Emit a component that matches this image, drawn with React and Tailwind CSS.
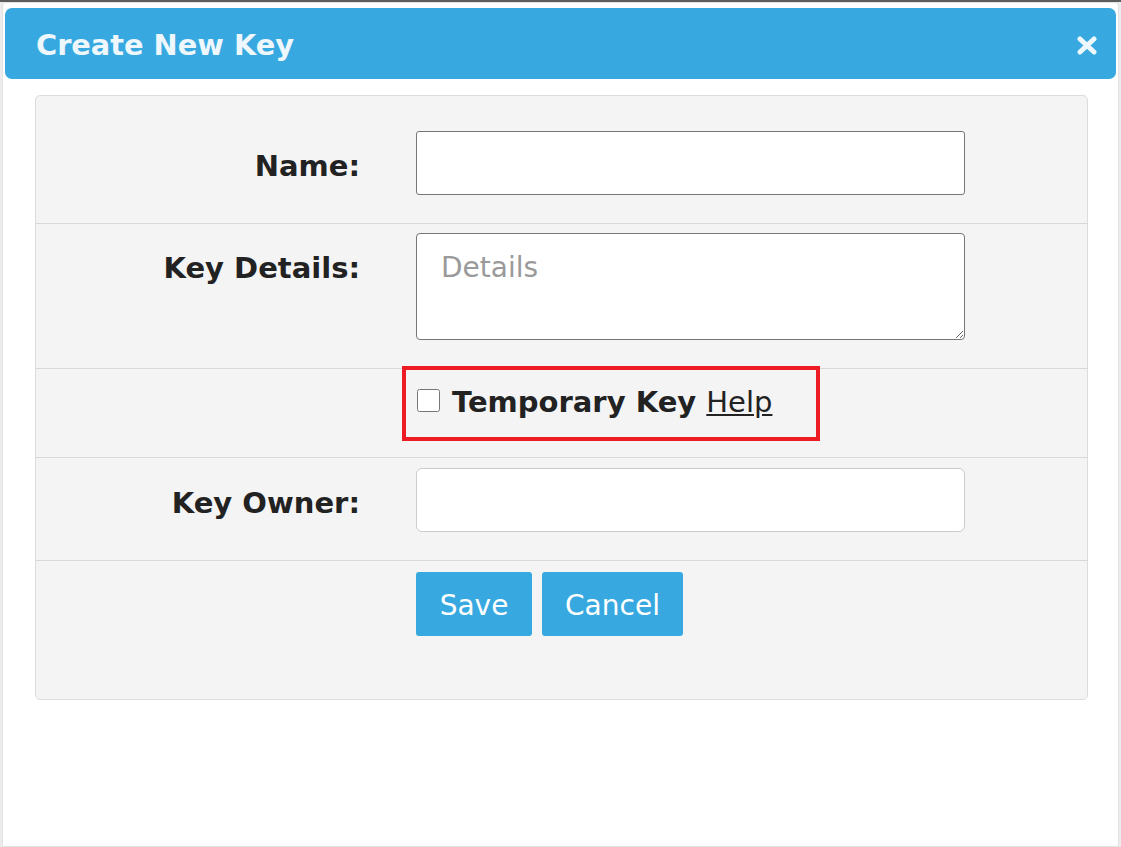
import { useState } from 'react'

const font = { fontFamily: '"DejaVu Sans", Verdana, sans-serif' }

function Label({ children }) {
  return (
    <div className="w-[324px] shrink-0 text-right pt-[18px] text-[29px] leading-[34px] font-bold text-[#222]">
      {children}
    </div>
  )
}

export default function App() {
  const [form, setForm] = useState({ name: '', details: '', temp: false, owner: '' })

  return (
    <div style={font} className="min-h-[847px] bg-[#ececec] border-t-2 border-[#5c5c5c] px-[2px]">
      <div className="min-h-[845px] bg-white border border-[#e2e2e2] rounded-t-[4px] px-[2px] pt-[5px]">
        <div className="h-[71px] bg-[#38a9e0] rounded-[7px] flex items-center justify-between pl-[31px] pr-[19px] pt-[3px]">
          <h1 className="text-[28.8px] font-bold text-[#eef7fc] leading-none">Create New Key</h1>
          <button type="button" className="text-[#eef7fc]">
            <svg width="20" height="19" viewBox="0 0 20 19">
              <path d="M3 3 L17 16 M17 3 L3 16" stroke="currentColor" strokeWidth="5" strokeLinecap="round" />
            </svg>
          </button>
        </div>

        <div className="mt-[16px] ml-[30px] mr-[28px] bg-[#f4f4f4] border border-[#dcdcdc] rounded-[5px]">
          <div className="flex h-[128px] pt-[35px] border-b border-[#d8d8d8]">
            <Label>Name:</Label>
            <input
              value={form.name}
              onChange={e => setForm({ ...form, name: e.target.value })}
              className="ml-[56px] w-[549px] h-[64px] bg-white border border-[#767676] rounded-[3px] outline-none px-[24px] text-[28px]"
            />
          </div>

          <div className="flex h-[145px] pt-[9px] border-b border-[#d8d8d8]">
            <Label>Key Details:</Label>
            <textarea
              placeholder="Details"
              value={form.details}
              onChange={e => setForm({ ...form, details: e.target.value })}
              className="ml-[56px] w-[549px] h-[107px] bg-white border border-[#767676] rounded-[4px] outline-none px-[24px] pt-[17px] text-[28px] leading-[34px] placeholder:text-[#9a9a9a]"
            />
          </div>

          <div className="relative flex h-[89px] pt-[21px] border-b border-[#d8d8d8]">
            <div className="ml-[381px] flex items-center h-[23px]">
              <input
                type="checkbox"
                checked={form.temp}
                onChange={e => setForm({ ...form, temp: e.target.checked })}
                className="w-[23px] h-[23px] m-0 -mt-[3px]"
              />
              <span className="ml-[12px] text-[29px] leading-[34px] font-bold text-[#222] whitespace-nowrap">
                Temporary Key <a href="#" className="font-normal underline text-[#222]">Help</a>
              </span>
            </div>
            <div className="absolute left-[366px] top-[-3px] w-[418px] h-[75px] border-[4px] border-[#ed1c24] pointer-events-none" />
          </div>

          <div className="flex h-[103px] pt-[10px] border-b border-[#d8d8d8]">
            <Label>Key Owner:</Label>
            <input
              value={form.owner}
              onChange={e => setForm({ ...form, owner: e.target.value })}
              className="ml-[56px] w-[549px] h-[64px] bg-white border border-[#cccccc] rounded-[6px] outline-none px-[24px] text-[28px]"
            />
          </div>

          <div className="flex gap-[10px] h-[138px] pt-[11px] pl-[380px]">
            <button type="button" className="h-[64px] w-[116px] pt-[3px] bg-[#38a9e0] text-white text-[28px] rounded-[3px]">
              Save
            </button>
            <button type="button" className="h-[64px] w-[141px] pt-[3px] bg-[#38a9e0] text-white text-[28px] rounded-[3px]">
              Cancel
            </button>
          </div>
        </div>
      </div>
    </div>
  )
}
